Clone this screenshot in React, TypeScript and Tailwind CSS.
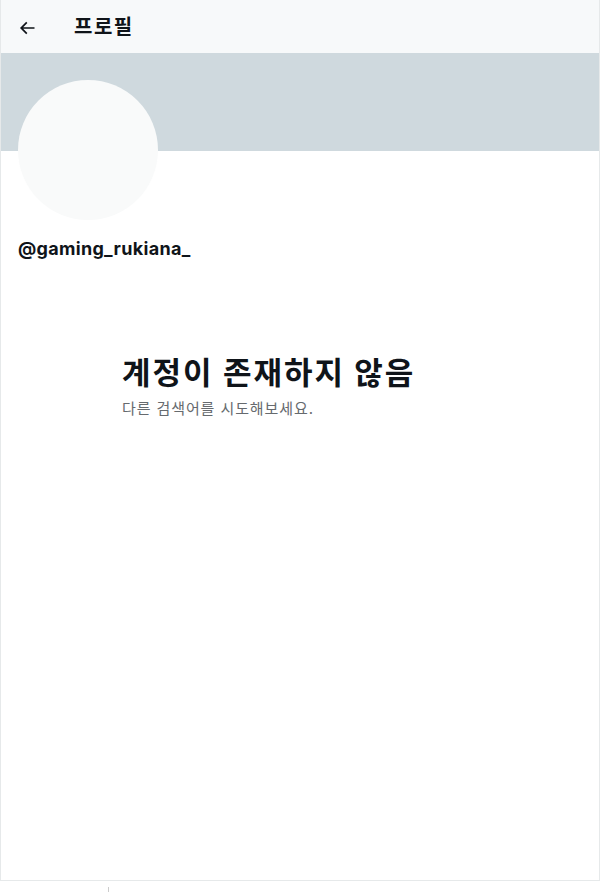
export default function App() {
  const font = { fontFamily: 'Inter, "Noto Sans CJK KR", sans-serif' };
  return (
    <div className="w-[600px] h-[892px] bg-white overflow-hidden" style={font}>
      <div className="w-[600px] h-[881px] border-l border-r border-b border-[#e6e9ea] flex flex-col">
        <div className="h-[53px] bg-[#f7f9fa] flex items-center shrink-0">
          <div className="w-[73px] pl-[16px] flex items-center">
            <svg viewBox="0 0 24 24" className="w-[20px] h-[20px] fill-[#0f1419] mt-[2px]">
              <path d="M7.414 13l5.043 5.04-1.414 1.42L3.586 12l7.457-7.46 1.414 1.42L7.414 11H21v2H7.414z" />
            </svg>
          </div>
          <div className="text-[20px] font-bold text-[#0f1419] leading-[24px] tracking-[1.5px]">프로필</div>
        </div>
        <div className="h-[98px] bg-[#cfd9de] shrink-0" />
        <div className="px-[17px]">
          <div className="w-[140px] h-[140px] rounded-full bg-[#f9fafa] -mt-[71px]" />
          <div className="mt-[17px] text-[18px] font-bold text-[#0f1419] leading-[24px] tracking-[0.3px]">@gaming_rukiana_</div>
        </div>
        <div className="pl-[121px] mt-[94px]">
          <div className="text-[31px] font-bold text-[#0f1419] leading-[36px] tracking-[2px]">계정이 존재하지 않음</div>
          <div className="text-[15px] font-normal text-[#666a6e] leading-[20px] mt-[8px] tracking-[0.9px]">다른 검색어를 시도해보세요.</div>
        </div>
      </div>
      <div className="ml-[108px] mt-[6px] w-px h-[6px] bg-[#cccccc]" />
    </div>
  );
}
